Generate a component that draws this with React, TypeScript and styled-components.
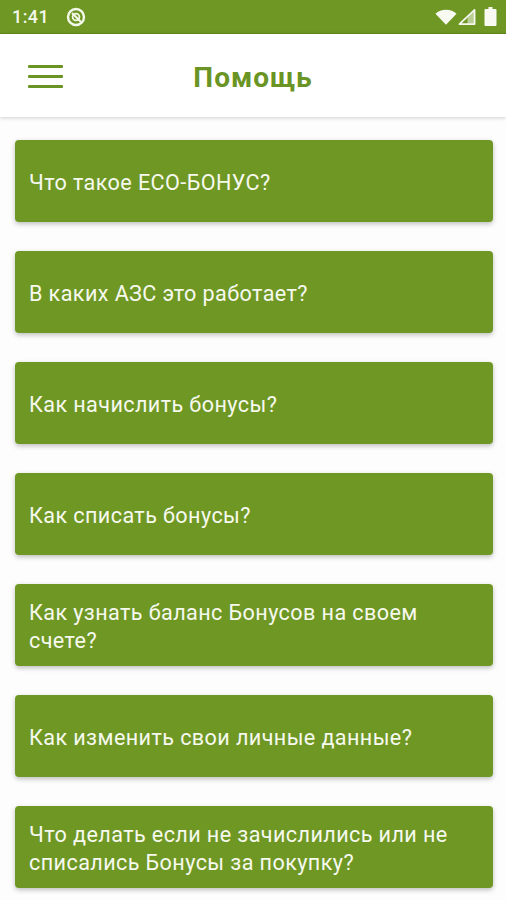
import React from 'react';
import styled, { createGlobalStyle } from 'styled-components';

const GlobalStyle = createGlobalStyle`
    html, body {
        margin: 0;
        padding: 0;
        background: #ffffff;
        font-family: Roboto, "Noto Sans", sans-serif;
    }
`;

const Screen = styled.div`
    width: 506px;
    height: 900px;
    overflow: hidden;
    display: flex;
    flex-direction: column;
    background: #fdfdfd;
`;

const StatusBar = styled.div`
    height: 34px;
    box-sizing: border-box;
    flex-shrink: 0;
    display: flex;
    align-items: center;
    padding: 0 9px 0 12px;
    background: #6f9724;
    border-bottom: 1px solid #5f8a1a;
    color: #f4f8ea;
`;

const Clock = styled.span`
    font-size: 18px;
    font-weight: 500;
    letter-spacing: 0.4px;
    margin-right: 17px;
`;

const StatusIcons = styled.div`
    margin-left: auto;
    display: flex;
    align-items: center;
    gap: 1px;
`;

const Battery = styled.svg`
    margin-left: 7px;
`;

const Header = styled.header`
    height: 83px;
    flex-shrink: 0;
    position: relative;
    display: flex;
    align-items: center;
    justify-content: center;
    background: #ffffff;
    box-shadow: 0 1px 4px rgba(0, 0, 0, 0.18);
`;

const MenuButton = styled.div`
    position: absolute;
    left: 28px;
    top: 31px;
    width: 35px;
    height: 23px;
    display: flex;
    flex-direction: column;
    justify-content: space-between;
`;

const MenuLine = styled.span`
    display: block;
    height: 3px;
    border-radius: 1px;
    background: #6a9424;
`;

const Title = styled.h1`
    margin: 3px 0 0;
    font-size: 28px;
    font-weight: 700;
    color: #6a9424;
    letter-spacing: 1px;
`;

const List = styled.div`
    display: flex;
    flex-direction: column;
    gap: 29px;
    padding: 23px 13px 0 14.5px;
`;

const Card = styled.div`
    height: 82px;
    box-sizing: border-box;
    flex-shrink: 0;
    display: flex;
    align-items: center;
    padding: 3px 15px 0 14.5px;
    border-radius: 4px;
    background: #6f9724;
    box-shadow: 0 2px 5px rgba(0, 0, 0, 0.25);
    color: #f6f9ee;
    font-size: 21.6px;
    line-height: 28px;
    letter-spacing: 0.4px;
`;

const questions = [
    'Что такое ECO-БОНУС?',
    'В каких АЗС это работает?',
    'Как начислить бонусы?',
    'Как списать бонусы?',
    'Как узнать баланс Бонусов на своем счете?',
    'Как изменить свои личные данные?',
    'Что делать если не зачислились или не списались Бонусы за покупку?',
];

function App() {
    return (
        <Screen>
            <GlobalStyle />
            <StatusBar>
                <Clock>1:41</Clock>
                <svg width="20" height="20" viewBox="0 0 20 20" fill="none" stroke="#f4f8ea">
                    <circle cx="10" cy="10" r="8" strokeWidth="2.4" />
                    <circle cx="10" cy="10" r="3.4" strokeWidth="1.8" />
                    <path d="M6 6l9 9" strokeWidth="2" />
                </svg>
                <StatusIcons>
                    <svg width="22" height="18" viewBox="0 0 24 18">
                        <path d="M0.5 5.5C3.5 2.5 7.5 1 12 1s8.500 1.500 11.500 4.500L12 17.500z" fill="#f8faf2" />
                    </svg>
                    <svg width="18" height="18" viewBox="0 0 19 18" fill="none" stroke="#f8faf2">
                        <path d="M1.500 16.500L17.500 1.500v15z" strokeWidth="1.800" strokeLinejoin="round" />
                        <path d="M10 16V9.500l7-6.500v13z" fill="#f8faf2" stroke="none" opacity="0.55" />
                    </svg>
                    <Battery width="13" height="19" viewBox="0 0 12 19">
                        <path d="M4 0h4v2h3a1 1 0 0 1 1 1v15a1 1 0 0 1-1 1H1a1 1 0 0 1-1-1V3a1 1 0 0 1 1-1h3z" fill="#f8faf2" />
                    </Battery>
                </StatusIcons>
            </StatusBar>
            <Header>
                <MenuButton>
                    <MenuLine />
                    <MenuLine />
                    <MenuLine />
                </MenuButton>
                <Title>Помощь</Title>
            </Header>
            <List>
                {questions.map((question) => (
                    <Card key={question}>{question}</Card>
                ))}
            </List>
        </Screen>
    );
}

export default App;
